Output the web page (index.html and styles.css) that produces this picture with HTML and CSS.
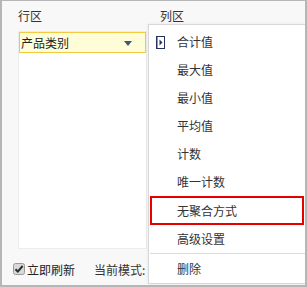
FILE: index.html
```html
<!DOCTYPE html>
<html lang="zh">
<head>
    <meta charset="UTF-8">
    <title>行区 / 列区</title>
    <link rel="stylesheet" href="styles.css">
</head>
<body>
    <div class="frame">
        <div class="areas">
            <div class="area row-area">
                <div class="area-title">行区</div>
                <div class="area-box">
                    <div class="field">
                        <span>产品类别</span>
                        <span class="field-arrow"></span>
                    </div>
                </div>
            </div>
            <div class="area col-area">
                <div class="area-title">列区</div>
                <div class="area-box"></div>
            </div>
        </div>
        <div class="footer">
            <label class="check">
                <svg width="12" height="12" viewBox="0 0 12 12">
                    <rect x="0.5" y="0.5" width="11" height="11" rx="2" fill="#d9d9d9" stroke="#9a9a9a"/>
                    <path d="M2.5 6.2 L4.8 8.6 L9.6 3" fill="none" stroke="#2b2b2b" stroke-width="2"/>
                </svg>
                立即刷新
            </label>
            <span class="mode">当前模式:</span>
        </div>

        <!-- context menu -->
        <div class="menu">
            <div class="menu-item has-sub">
                <svg class="sub-icon" width="9" height="13" viewBox="0 0 9 13">
                    <rect x="0.5" y="0.5" width="8" height="12" fill="#fff" stroke="#27325e"/>
                    <rect x="0.5" y="0.5" width="1" height="12" fill="#27325e"/>
                    <path d="M3.5 3.5 L6.5 6.5 L3.5 9.5 Z" fill="#27325e"/>
                </svg>
                合计值
            </div>
            <div class="menu-item">最大值</div>
            <div class="menu-item">最小值</div>
            <div class="menu-item">平均值</div>
            <div class="menu-item">计数</div>
            <div class="menu-item">唯一计数</div>
            <div class="menu-item selected">无聚合方式</div>
            <div class="menu-item">高级设置</div>
            <div class="menu-sep"></div>
            <div class="menu-item last">删除</div>
        </div>
    </div>
</body>
</html>
```

FILE: styles.css
```css
body {
    margin: 0;
    font-family: "Noto Sans CJK SC", "Noto Sans", sans-serif;
    font-size: 12px;
    color: #333;
}
.frame {
    position: relative;
    width: 307px;
    height: 287px;
    box-sizing: border-box;
    background-color: #f8f8f8;
    border: 2px solid #b6b6b6;
    border-top-width: 1px;
    overflow: hidden;
}
.areas {
    display: flex;
    gap: 13px;
    padding: 7px 0 0 16px;
}
.row-area {
    width: 129px;
}
.col-area {
    flex: 1;
}
.area-title {
    height: 16px;
    line-height: 16px;
    margin-bottom: 7px;
}
.area-box {
    height: 216px;
    background-color: #fff;
    border: 1px solid #ececec;
}
.field {
    display: flex;
    justify-content: space-between;
    align-items: center;
    height: 19px;
    padding: 0 13px 0 1px;
    background-color: #fffcd8;
    border: 1px solid #f3c940;
    color: #222;
}
.field-arrow {
    width: 0;
    height: 0;
    border-left: 4px solid transparent;
    border-right: 4px solid transparent;
    border-top: 5px solid #3c5878;
    margin-top: 2px;
}
.footer {
    display: flex;
    align-items: center;
    height: 16px;
    margin-top: 12px;
    padding-left: 11px;
}
.check {
    display: flex;
    align-items: center;
    gap: 2px;
    color: #222;
}
.mode {
    margin-left: 19px;
}
.menu {
    position: absolute;
    left: 146px;
    top: 23px;
    right: 0;
    bottom: 1px;
    padding-top: 3px;
    background-color: #fff;
    border: 1px solid #d8d8d8;
    border-right: none;
    box-shadow: 0 0 3px rgba(0, 0, 0, 0.08);
}
.menu-item {
    height: 28px;
    line-height: 28px;
    padding-left: 28px;
    color: #333;
}
.menu-item.has-sub {
    display: flex;
    align-items: center;
    padding-left: 7px;
}
.sub-icon {
    margin-right: 12px;
}
.menu-item.selected {
    height: 25px;
    line-height: 25px;
    margin-left: 1px;
    margin-right: 1px;
    padding-left: 25px;
    border: 2px solid #e60000;
}
.menu-sep {
    height: 1px;
    margin-left: 1px;
    background-color: #dcdcdc;
}
.menu-item.last {
    height: 30px;
    line-height: 30px;
}
```
